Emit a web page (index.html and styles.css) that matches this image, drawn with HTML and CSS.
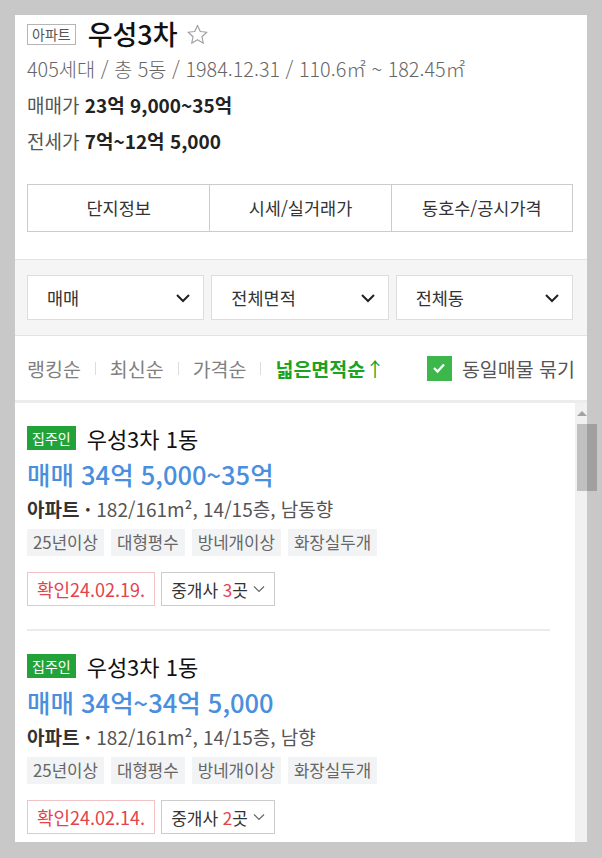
FILE: index.html
```html
<!DOCTYPE html>
<html lang="ko">
<head>
  <meta charset="UTF-8">
  <meta name="viewport" content="width=device-width, initial-scale=1.0">
  <title>우성3차</title>
  <link rel="stylesheet" href="styles.css">
</head>
<body>
  <div class="panel">
    <section class="summary">
      <div class="title-row">
        <span class="type-badge">아파트</span>
        <h1>우성3차</h1>
        <svg class="star" width="23" height="23" viewBox="0 0 24 24"><path d="M12 2.5l2.9 6.4 6.9.7-5.2 4.7 1.5 6.9L12 17.6l-6.1 3.6 1.5-6.9-5.2-4.7 6.9-.7z" fill="none" stroke="#a0a0a0" stroke-width="1.2" stroke-linejoin="round"/></svg>
      </div>
      <p class="meta">405세대 / 총 5동 / 1984.12.31 / 110.6㎡ ~ 182.45㎡</p>
      <p class="price-line">매매가 <b>23억 9,000~35억</b></p>
      <p class="price-line">전세가 <b>7억~12억 5,000</b></p>
      <nav class="tabs">
        <a>단지정보</a>
        <a>시세/실거래가</a>
        <a>동호수/공시가격</a>
      </nav>
    </section>

    <section class="filters">
      <div class="select"><span>매매</span><svg width="16" height="10" viewBox="0 0 16 10"><path d="M2 2l6 6 6-6" fill="none" stroke="#222" stroke-width="2"/></svg></div>
      <div class="select"><span>전체면적</span><svg width="16" height="10" viewBox="0 0 16 10"><path d="M2 2l6 6 6-6" fill="none" stroke="#222" stroke-width="2"/></svg></div>
      <div class="select"><span>전체동</span><svg width="16" height="10" viewBox="0 0 16 10"><path d="M2 2l6 6 6-6" fill="none" stroke="#222" stroke-width="2"/></svg></div>
    </section>

    <section class="sort">
      <div class="sort-links">
        <a>랭킹순</a><i></i>
        <a>최신순</a><i></i>
        <a>가격순</a><i></i>
        <a class="on"><b>넓은면적순</b>↑</a>
      </div>
      <label class="group">
        <span class="check"><svg width="14" height="12" viewBox="0 0 14 12"><path d="M2 6l3.5 3.5L12 2.5" fill="none" stroke="#fff" stroke-width="2.4"/></svg></span>
        동일매물 묶기
      </label>
    </section>

    <div class="list-wrap">
      <ul class="list">
        <li class="item">
          <div class="item-title"><span class="owner">집주인</span>우성3차 1동</div>
          <p class="item-price">매매 34억 5,000~35억</p>
          <p class="item-info"><b>아파트 ·</b> 182/161m², 14/15층, 남동향</p>
          <div class="tags"><span>25년이상</span><span>대형평수</span><span>방네개이상</span><span>화장실두개</span></div>
          <div class="actions">
            <span class="confirm">확인24.02.19.</span>
            <span class="agent"><span>중개사 <em>3</em>곳</span><svg width="12" height="8" viewBox="0 0 12 8"><path d="M1 1.5l5 5 5-5" fill="none" stroke="#666" stroke-width="1.2"/></svg></span>
          </div>
        </li>
        <li class="item">
          <div class="item-title"><span class="owner">집주인</span>우성3차 1동</div>
          <p class="item-price">매매 34억~34억 5,000</p>
          <p class="item-info"><b>아파트 ·</b> 182/161m², 14/15층, 남향</p>
          <div class="tags"><span>25년이상</span><span>대형평수</span><span>방네개이상</span><span>화장실두개</span></div>
          <div class="actions">
            <span class="confirm">확인24.02.14.</span>
            <span class="agent"><span>중개사 <em>2</em>곳</span><svg width="12" height="8" viewBox="0 0 12 8"><path d="M1 1.5l5 5 5-5" fill="none" stroke="#666" stroke-width="1.2"/></svg></span>
          </div>
        </li>
      </ul>
      <div class="track"><span class="arrow"></span></div>
      <div class="thumb"></div>
    </div>
  </div>
</body>
</html>
```

FILE: styles.css
```css
body {
  margin: 0;
  background: #c8c8c8;
  font-family: "Noto Sans CJK KR", "Noto Sans", sans-serif;
  color: #333;
}
p { margin: 0; }

.panel {
  width: 572px;
  margin: 15px 0 0 15px;
  background: #fff;
}

/* 단지 요약 */
.summary { padding: 3px 14px 27px 12px; }
.title-row { display: flex; align-items: center; height: 32px; }
.type-badge {
  border: 1px solid #b5b5b5;
  color: #555;
  font-size: 14px;
  line-height: 19px;
  padding: 0 4px;
}
.title-row h1 {
  margin: 0 0 0 12px;
  font-size: 27px;
  font-weight: 500;
  color: #111;
  line-height: 32px;
}
.star { margin-left: 8px; }
.meta { font-size: 19.8px; font-weight: 300; color: #666; line-height: 36px; margin-top: 1px; }
.price-line { font-size: 19px; color: #555; line-height: 36px; }
.price-line b { color: #222; }

.tabs {
  display: grid;
  grid-template-columns: 1fr 1fr 1fr;
  margin-top: 25px;
  border: 1px solid #ccc;
}
.tabs a {
  height: 46px;
  line-height: 46px;
  text-align: center;
  font-size: 17.5px;
  color: #333;
}
.tabs a + a { border-left: 1px solid #ccc; }

/* 필터 */
.filters {
  display: flex;
  gap: 7px;
  padding: 15px 14px 15px 12px;
  background: #f5f5f5;
  border-top: 1px solid #e3e3e3;
  border-bottom: 1px solid #e3e3e3;
}
.select {
  flex: 1;
  height: 43px;
  display: flex;
  align-items: center;
  justify-content: space-between;
  padding: 0 12px 0 19px;
  background: #fff;
  border: 1px solid #ddd;
  font-size: 17.5px;
  color: #333;
}

/* 정렬 */
.sort {
  height: 64px;
  display: flex;
  align-items: center;
  justify-content: space-between;
  padding: 0 12px;
  border-bottom: 3px solid #ececec;
}
.sort-links { display: flex; align-items: center; font-size: 19.5px; color: #808080; }
.sort-links i { width: 1px; height: 13px; background: #ddd; margin: 0 14px; }
.sort-links .on { color: #1aa31e; }
.group { display: flex; align-items: center; font-size: 19.5px; color: #555; }
.check {
  width: 25px;
  height: 25px;
  background: #3db64b;
  display: flex;
  align-items: center;
  justify-content: center;
  margin-right: 10px;
}

/* 매물 목록 */
.list-wrap { position: relative; display: flex; height: 439px; }
.list {
  flex: 1;
  list-style: none;
  margin: 0;
  padding: 0 25px 0 12px;
  overflow: hidden;
}
.item { padding: 23px 0; border-bottom: 2px solid #ebebeb; }
.item:last-child { border-bottom: none; }
.item-title { display: flex; align-items: center; height: 24px; font-size: 22px; color: #111; }
.owner {
  background: #22a33a;
  color: #fff;
  font-size: 14px;
  line-height: 24px;
  padding: 0 5px;
  margin-right: 11px;
}
.item-price { font-size: 25.5px; font-weight: 500; color: #4a8fdd; line-height: 40px; margin-top: 4px; }
.item-info { font-size: 19px; color: #555; line-height: 30px; }
.item-info b { color: #333; }
.tags { display: flex; gap: 7px; margin-top: 5px; }
.tags span {
  background: #f2f3f5;
  color: #666;
  font-size: 16.8px;
  line-height: 27px;
  padding: 0 6px;
}
.actions { display: flex; gap: 6px; margin-top: 16px; }
.confirm, .agent {
  height: 32px;
  display: flex;
  align-items: center;
  font-size: 18px;
}
.confirm { padding: 0 9px; border: 1px solid #f1c2c4; color: #e5424b; }
.agent { padding: 0 9px; border: 1px solid #ccc; color: #333; font-size: 17px; }
.agent em { font-style: normal; color: #e5424b; }
.agent svg { margin-left: 5px; }

.track { width: 12px; background: #f1f1f1; }
.arrow {
  display: block;
  width: 0;
  height: 0;
  margin: 8px 0 0 2px;
  border-left: 5px solid transparent;
  border-right: 5px solid transparent;
  border-bottom: 5px solid #a3a3a3;
}
.thumb {
  position: absolute;
  left: 562px;
  top: 21px;
  width: 20px;
  height: 67px;
  background: rgba(0, 0, 0, 0.2);
}
```
